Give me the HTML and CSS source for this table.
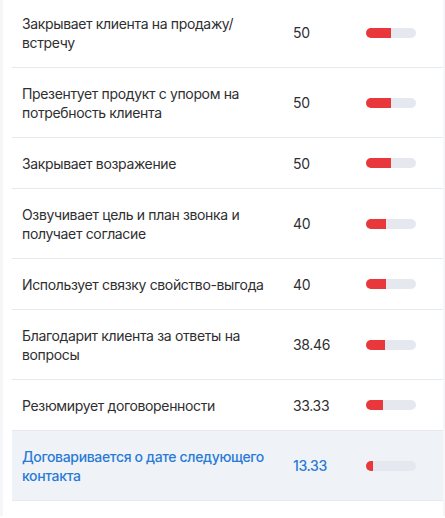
FILE: index.html
```html
<!DOCTYPE html>
<html lang="ru">
<head>
    <meta charset="UTF-8">
    <meta name="viewport" content="width=device-width, initial-scale=1.0">
    <title>Критерии</title>
    <link rel="stylesheet" href="styles.css">
</head>
<body>
    <div class="panel">
        <table class="criteria">
            <colgroup>
                <col class="col-name">
                <col class="col-score">
                <col class="col-bar">
            </colgroup>
            <tbody>
                <tr>
                    <td>Закрывает клиента на продажу/ встречу</td>
                    <td class="score">50</td>
                    <td><div class="bar"><div class="bar-fill" style="width: 50%"></div></div></td>
                </tr>
                <tr>
                    <td>Презентует продукт с упором на потребность клиента</td>
                    <td class="score">50</td>
                    <td><div class="bar"><div class="bar-fill" style="width: 50%"></div></div></td>
                </tr>
                <tr>
                    <td>Закрывает возражение</td>
                    <td class="score">50</td>
                    <td><div class="bar"><div class="bar-fill" style="width: 50%"></div></div></td>
                </tr>
                <tr>
                    <td>Озвучивает цель и план звонка и получает согласие</td>
                    <td class="score">40</td>
                    <td><div class="bar"><div class="bar-fill" style="width: 40%"></div></div></td>
                </tr>
                <tr>
                    <td>Использует связку свойство-выгода</td>
                    <td class="score">40</td>
                    <td><div class="bar"><div class="bar-fill" style="width: 40%"></div></div></td>
                </tr>
                <tr>
                    <td>Благодарит клиента за ответы на вопросы</td>
                    <td class="score">38.46</td>
                    <td><div class="bar"><div class="bar-fill" style="width: 38.46%"></div></div></td>
                </tr>
                <tr>
                    <td>Резюмирует договоренности</td>
                    <td class="score">33.33</td>
                    <td><div class="bar"><div class="bar-fill" style="width: 33.33%"></div></div></td>
                </tr>
                <tr class="active">
                    <td>Договаривается о дате следующего контакта</td>
                    <td class="score">13.33</td>
                    <td><div class="bar"><div class="bar-fill" style="width: 13.33%"></div></div></td>
                </tr>
            </tbody>
        </table>
    </div>
</body>
</html>
```

FILE: styles.css
```css
:root {
    --text: #2f2f31;
    --blue: #2a7ad6;
    --line: #e6e9ee;
    --track: #e5e8ef;
    --red: #e8383b;
    --active-bg: #eff3f8;
}

* {
    box-sizing: border-box;
}

body {
    margin: 0;
    background: #ffffff;
    font-family: Inter, "Noto Sans", sans-serif;
    color: var(--text);
}

.panel {
    border-left: 3px solid #f5f6f8;
    border-right: 2px solid #f5f6f8;
    padding-left: 9px;
    min-height: 518px;
}

.criteria {
    width: 100%;
    margin-top: -2px;
    border-collapse: collapse;
    table-layout: fixed;
}

.col-name {
    width: 281px;
}

.col-score {
    width: 73px;
}

.criteria td {
    padding: 15.5px 10px;
    font-size: 14px;
    line-height: 19px;
    letter-spacing: -0.35px;
    border-bottom: 1px solid var(--line);
    vertical-align: middle;
}

.criteria td.score {
    padding-left: 0;
}

.criteria td:last-child {
    padding-left: 0;
}

.bar {
    width: 50px;
    height: 10px;
    border-radius: 5px;
    background: var(--track);
    overflow: hidden;
}

.bar-fill {
    height: 100%;
    background: var(--red);
}

.criteria tr.active td {
    background: var(--active-bg);
    color: var(--blue);
    font-weight: 500;
}
```
